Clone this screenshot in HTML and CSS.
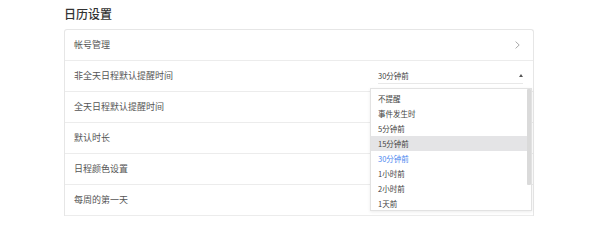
FILE: index.html
```html
<!DOCTYPE html>
<html lang="zh">
<head>
<meta charset="utf-8">
<link rel="stylesheet" href="styles.css">
</head>
<body>
<div class="page">
  <h1 class="title">日历设置</h1>
  <div class="card">
    <div class="row">
      <span class="label">帐号管理</span>
      <svg class="chev" width="5" height="8" viewBox="0 0 5 8"><path d="M0.6 0.6 L4.2 4 L0.6 7.4" fill="none" stroke="#a0a0a0" stroke-width="0.9"/></svg>
    </div>
    <div class="row row-select">
      <span class="label">非全天日程默认提醒时间</span>
      <div class="select">
        <span class="select-value">30分钟前</span>
        <span class="caret"></span>
        <div class="dropdown">
          <div class="opt">不提醒</div>
          <div class="opt">事件发生时</div>
          <div class="opt">5分钟前</div>
          <div class="opt hover">15分钟前</div>
          <div class="opt active">30分钟前</div>
          <div class="opt">1小时前</div>
          <div class="opt">2小时前</div>
          <div class="opt">1天前</div>
          <div class="thumb"></div>
        </div>
      </div>
    </div>
    <div class="row"><span class="label">全天日程默认提醒时间</span></div>
    <div class="row"><span class="label">默认时长</span></div>
    <div class="row"><span class="label">日程颜色设置</span></div>
    <div class="row"><span class="label">每周的第一天</span></div>
  </div>
</div>
</body>
</html>
```

FILE: styles.css
```css
html, body {
  margin: 0;
  padding: 0;
  background: #fff;
  overflow: hidden;
}
body {
  font-family: "Noto Sans CJK SC", "Noto Sans", "Liberation Sans", sans-serif;
  color: #555;
}
.page {
  padding-left: 64px;
  width: 470px;
}
.title {
  margin: 6px 0 0 0;
  font-size: 12px;
  line-height: 16px;
  font-weight: 500;
  color: #333;
}
.card {
  margin-top: 7px;
  border: 1px solid #e6e6e6;
  border-bottom: none;
  border-radius: 3px 3px 0 0;
  box-sizing: border-box;
  width: 470px;
}
.row {
  height: 30px;
  border-bottom: 1px solid #ececec;
  display: flex;
  align-items: center;
  justify-content: space-between;
  padding: 0 12px 0 9px;
}
.label {
  font-size: 9px;
  color: #555;
  line-height: 12px;
}
.chev {
  display: block;
  margin-right: 1px;
}
.row-select {
  align-items: flex-start;
  padding-right: 10px;
}
.row-select .label {
  margin-top: 9px;
}
.select {
  position: relative;
  margin-top: 7px;
  width: 145px;
  height: 15px;
  border-bottom: 1px solid #e8e8e8;
  display: flex;
  align-items: center;
  justify-content: space-between;
}
.select-value {
  font-size: 7.5px;
  color: #444;
  line-height: 15px;
}
.caret {
  width: 0;
  height: 0;
  border-left: 2.5px solid transparent;
  border-right: 2.5px solid transparent;
  border-bottom: 3px solid #555;
  margin-right: 0;
}
.dropdown {
  position: absolute;
  left: -8px;
  top: 20px;
  width: 162px;
  height: 123px;
  box-sizing: border-box;
  padding-top: 2px;
  background: #fff;
  border: 1px solid #e2e2e2;
  box-shadow: 0 1px 3px rgba(0,0,0,0.08);
  z-index: 5;
}
.opt {
  height: 15px;
  line-height: 15px;
  padding-left: 7px;
  font-size: 7.5px;
  color: #444;
  margin-right: 4px;
}
.opt.hover {
  background: #e4e4e6;
}
.opt.active {
  color: #4d88ef;
}
.thumb {
  position: absolute;
  right: 0;
  top: 0;
  width: 4px;
  height: 96px;
  background: #dadada;
  border-radius: 1px;
}
```
